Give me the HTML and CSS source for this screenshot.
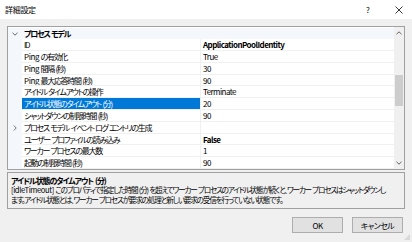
FILE: index.html
```html
<!DOCTYPE html>
<html lang="ja">
<head>
  <meta charset="UTF-8">
  <title>詳細設定</title>
  <link rel="stylesheet" href="styles.css">
</head>
<body>

<div class="dialog">
  <div class="titlebar">
    <span class="title">詳細設定</span>
    <span class="help">?</span>
    <span class="close">
      <svg width="8" height="8" viewBox="0 0 8 8"><path d="M0.5 0.5L7.5 7.5M7.5 0.5L0.5 7.5" stroke="#222" stroke-width="0.9" fill="none"/></svg>
    </span>
  </div>

  <div class="content">
    <div class="grid">
      <div class="rows">
        <div class="row cat">
          <span class="gut">
            <svg width="6" height="4" viewBox="0 0 6 4"><path d="M0.5 0.8L3 3.2L5.5 0.8" stroke="#555" stroke-width="0.9" fill="none"/></svg>
          </span>
          <span class="name">プロセス モデル</span>
        </div>
        <div class="row"><span class="gut"></span><span class="name">ID</span><span class="val bold">ApplicationPoolIdentity</span></div>
        <div class="row"><span class="gut"></span><span class="name"><span class="lat">Ping</span> の有効化</span><span class="val">True</span></div>
        <div class="row"><span class="gut"></span><span class="name"><span class="lat">Ping</span> 間隔 (秒)</span><span class="val">30</span></div>
        <div class="row"><span class="gut"></span><span class="name"><span class="lat">Ping</span> 最大応答時間 (秒)</span><span class="val">90</span></div>
        <div class="row"><span class="gut"></span><span class="name">アイドル タイムアウトの操作</span><span class="val">Terminate</span></div>
        <div class="row selected"><span class="gut"></span><span class="name">アイドル状態のタイムアウト (分)</span><span class="val">20</span></div>
        <div class="row"><span class="gut"></span><span class="name">シャットダウンの制限時間 (秒)</span><span class="val">90</span></div>
        <div class="row">
          <span class="gut">
            <svg width="4" height="6" viewBox="0 0 4 6"><path d="M0.8 0.5L3.2 3L0.8 5.5" stroke="#666" stroke-width="0.9" fill="none"/></svg>
          </span>
          <span class="name">プロセス モデル イベント ログ エントリの生成</span><span class="val"></span>
        </div>
        <div class="row"><span class="gut"></span><span class="name">ユーザー プロファイルの読み込み</span><span class="val bold">False</span></div>
        <div class="row"><span class="gut"></span><span class="name">ワーカー プロセスの最大数</span><span class="val">1</span></div>
        <div class="row"><span class="gut"></span><span class="name">起動の制限時間 (秒)</span><span class="val">90</span></div>
      </div>
      <div class="scrollbar">
        <div class="arrow">
          <svg width="6" height="4" viewBox="0 0 6 4"><path d="M0.5 3.2L3 0.8L5.5 3.2" stroke="#606060" stroke-width="1" fill="none"/></svg>
        </div>
        <div class="track"><div class="thumb"></div></div>
        <div class="arrow">
          <svg width="6" height="4" viewBox="0 0 6 4"><path d="M0.5 0.8L3 3.2L5.5 0.8" stroke="#606060" stroke-width="1" fill="none"/></svg>
        </div>
      </div>
    </div>

    <div class="desc">
      <div class="desc-title">アイドル状態のタイムアウト (分)</div>
      <div class="desc-text"><span class="lat">[idleTimeout]</span> このプロパティで指定した時間 (分) を超えてワーカー プロセスのアイドル状態が続くと、ワーカー プロセスはシャットダウンし<br>ます。アイドル状態とは、ワーカー プロセスが要求の処理と新しい要求の受信を行っていない状態です。</div>
    </div>

    <div class="buttons">
      <button class="btn default">OK</button>
      <button class="btn">キャンセル</button>
    </div>
  </div>

  <div class="grip"></div>
</div>

</body>
</html>
```

FILE: styles.css
```css
* {
  box-sizing: border-box;
  margin: 0;
  padding: 0;
}
html, body {
  width: 412px;
  height: 242px;
  overflow: hidden;
}
body {
  font-family: "Noto Sans CJK JP", "Noto Sans", sans-serif;
  font-size: 8px;
  color: #000;
  font-feature-settings: "palt";
}
.dialog {
  position: relative;
  width: 412px;
  height: 242px;
  display: flex;
  flex-direction: column;
  background: #f0f0f0;
}
.titlebar {
  height: 19px;
  background: #fff;
  display: flex;
  align-items: center;
  padding-left: 5px;
  flex-shrink: 0;
}
.titlebar .title {
  flex: 1;
  font-size: 8px;
  letter-spacing: -0.3px;
}
.titlebar .help {
  width: 29px;
  font-size: 8px;
  text-align: left;
}
.titlebar .close {
  width: 17px;
  display: flex;
  align-items: center;
}
.content {
  flex: 1;
  display: flex;
  flex-direction: column;
  padding: 7px 7px 0 7px;
}
.grid {
  height: 144px;
  border: 1px solid #a0a0a0;
  background: #fff;
  display: flex;
  overflow: hidden;
}
.rows {
  flex: 1;
  display: flex;
  flex-direction: column;
  overflow: hidden;
  padding-top: 0.5px;
}
.row {
  height: 11.8px;
  flex-shrink: 0;
  display: flex;
  line-height: 11px;
  white-space: nowrap;
}
.row .gut {
  width: 14px;
  flex-shrink: 0;
  background: #f4f7fb;
  display: flex;
  align-items: center;
  justify-content: center;
  padding-top: 1px;
}
.row .name {
  width: 179px;
  flex-shrink: 0;
  padding-left: 2px;
  border-bottom: 1px solid #f0f0f0;
  border-right: 1px solid #f0f0f0;
  overflow: hidden;
  letter-spacing: -1.3px;
  word-spacing: 1px;
}
.row .val {
  flex: 1;
  padding-left: 2px;
  border-bottom: 1px solid #f0f0f0;
  overflow: hidden;
  letter-spacing: -0.55px;
}
.lat {
  letter-spacing: -0.4px;
}
.row.cat {
  background: #f4f7fb;
}
.row.cat .name {
  width: auto;
  flex: 1;
  font-weight: bold;
  border: 0;
}
.row.selected .name {
  background: #0078d7;
  color: #fff;
}
.bold {
  font-weight: bold;
}
.scrollbar {
  width: 10px;
  flex-shrink: 0;
  background: #f0f0f0;
  display: flex;
  flex-direction: column;
}
.scrollbar .arrow {
  height: 12px;
  display: flex;
  align-items: center;
  justify-content: center;
}
.scrollbar .track {
  flex: 1;
  padding: 0 1px;
}
.scrollbar .thumb {
  margin-top: 36px;
  height: 31px;
  background: #cdcdcd;
}
.desc {
  margin-top: 2px;
  height: 37px;
  border: 1px solid #a0a0a0;
  padding: 2.5px 3px 0 3px;
  line-height: 9.5px;
  white-space: nowrap;
  font-size: 7.6px;
  letter-spacing: -1.18px;
  word-spacing: 0.8px;
}
.desc-title {
  font-weight: bold;
  font-size: 8px;
  letter-spacing: -1.1px;
  word-spacing: 1.2px;
}
.buttons {
  margin-top: 8px;
  display: flex;
  justify-content: flex-end;
  gap: 9px;
  padding-right: 2px;
}
.btn {
  width: 51px;
  height: 16px;
  background: #e1e1e1;
  border: 1px solid #adadad;
  font-family: inherit;
  font-size: 8px;
  font-feature-settings: "palt";
  color: #000;
  letter-spacing: -0.6px;
}
.grip {
  position: absolute;
  right: 2px;
  bottom: 2px;
  width: 6px;
  height: 6px;
  background:
    radial-gradient(circle, #bcbcbc 0.6px, transparent 0.8px) 0 0 / 2px 2px;
  clip-path: polygon(100% 0, 100% 100%, 0 100%);
}
```
